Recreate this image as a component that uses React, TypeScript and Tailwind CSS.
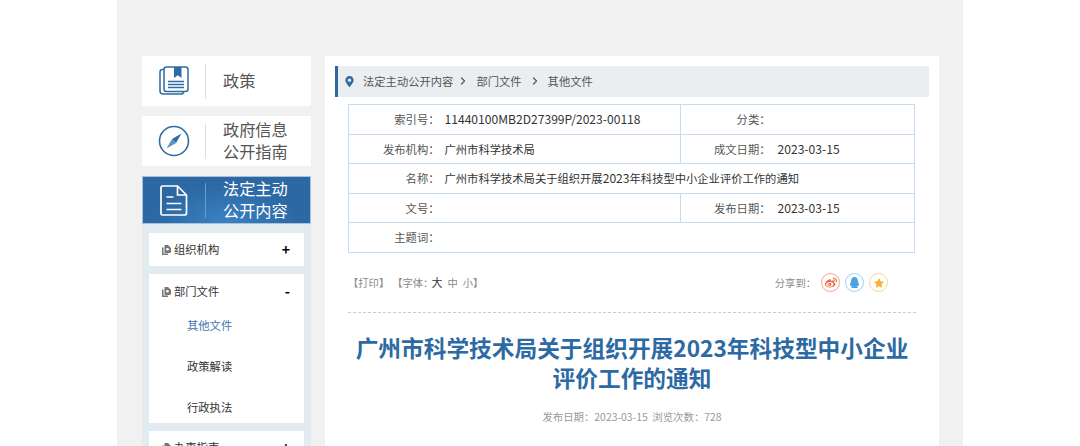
import { ChevronRight } from 'lucide-react'
import { FaMapMarkerAlt, FaQq, FaStar, FaWeibo } from 'react-icons/fa'

const font = { fontFamily: '"Noto Sans CJK SC", sans-serif' }

const BookIcon = () => (
  <svg width="30" height="30" viewBox="0 0 30 30" fill="none" stroke="#2f6ca6" strokeWidth="1.5">
    <path d="M5 3.500H3.500a2.500 2.500 0 0 0-2.500 2.500v19a3 3 0 0 0 3 3h18a2.500 2.500 0 0 0 2.500-2.200" />
    <rect x="5" y="1" width="24" height="24.500" rx="2.500" />
    <path d="M15 1h7.500v11l-3.700-2.800-3.800 2.800z" fill="#2f6ca6" stroke="none" />
    <path d="M9 15.500h16M9 18.500h16M9 21.500h16" />
  </svg>
)

const CompassIcon = () => (
  <svg width="32" height="32" viewBox="0 0 32 32" fill="none">
    <circle cx="16" cy="16" r="14.500" stroke="#2f6ca6" strokeWidth="1.600" />
    <path d="M23.500 8.500 18 18l-4-4z" fill="#2f6ca6" />
    <path d="M8.500 23.500 14 14l4 4z" fill="#2f6ca6" opacity="0.75" />
  </svg>
)

const DocIcon = () => (
  <svg width="28" height="31" viewBox="0 0 28 31" fill="none" stroke="#fff" strokeWidth="1.700">
    <path d="M2.500 1h15l9 9v18a2 2 0 0 1-2 2h-22a1.500 1.500 0 0 1-1.500-1.500v-26a1.500 1.500 0 0 1 1.500-1.500z" />
    <path d="M17.500 1v9h9M6.500 12h7M6.500 18.500h15M6.500 24.500h15" />
  </svg>
)

const ItemIcon = () => (
  <svg width="9" height="10" viewBox="0 0 9 10" className="shrink-0">
    <path d="M0 2.500h1.500V8.500H6V10H0z" fill="#777" />
    <path d="M2.500 0H6l3 3v3.500a1.500 1.500 0 0 1-1.500 1.500h-5z" fill="#777" />
    <circle cx="5.500" cy="4.200" r="1.300" fill="#fff" />
  </svg>
)

const NavCard = ({ icon, lines, active }: { icon: React.ReactNode; lines: string[]; active?: boolean }) => (
  <div
    className={
      active
        ? 'flex h-[48px] items-center border border-[#a9c3dc] bg-[radial-gradient(ellipse_at_50%_100%,#3b82c4_0%,#2c68a4_60%)] text-white'
        : 'flex h-[50px] items-center bg-white text-[#555]'
    }
  >
    <div className={active ? 'flex w-[62px] shrink-0 justify-center' : 'flex w-[63px] shrink-0 justify-center'}>{icon}</div>
    <div className={active ? 'h-[35px] w-px bg-[#6f9cc6]' : 'h-[35px] w-px bg-[#ddd]'} />
    <div className="pb-[2px] pl-[17px] text-[16.2px] leading-[22px]">
      {lines.map(l => (
        <div key={l}>{l}</div>
      ))}
    </div>
  </div>
)

const SideRow = ({ label, sign }: { label: string; sign: string }) => (
  <div className="flex h-[33px] items-center pl-[13px] pr-[14px] text-[11.3px] text-[#333]">
    <ItemIcon />
    <span className="ml-[3px]">{label}</span>
    <span className="ml-auto text-[14px] font-bold text-black">{sign}</span>
  </div>
)

const labelCell = 'border-y border-[#c6dcf0] text-right text-[#555]'
const valueCell = 'border-y border-r border-[#c6dcf0] pl-[5px] text-left text-[#333]'
const valueCellRight = 'border-y border-r border-[#c6dcf0] pl-[7px] text-left text-[#333]'
const latin = 'text-[12.1px]'

export default function App() {
  return (
    <div className="h-[446px] overflow-hidden bg-white" style={font}>
      <div className="mx-[117px] flex h-full gap-[14px] bg-[#f1f1f1] pl-[25px] pr-[24px] pt-[56px]">
        {/* left nav */}
        <div className="w-[169px] shrink-0">
          <NavCard icon={<BookIcon />} lines={['政策']} />
          <div className="mt-[10px]">
            <NavCard icon={<CompassIcon />} lines={['政府信息', '公开指南']} />
          </div>
          <div className="mt-[10px]">
            <NavCard active icon={<DocIcon />} lines={['法定主动', '公开内容']} />
          </div>
          <div className="bg-[#e1ebf0] px-[7px] pb-[8px] pt-[9px]">
            <div className="bg-white">
              <SideRow label="组织机构" sign="+" />
            </div>
            <div className="mt-[8px] h-[149px] bg-white pt-[1px]">
              <SideRow label="部门文件" sign="-" />
              <div className="pl-[38px] text-[11.3px] text-[#333]">
                <div className="h-[41px] pt-[7px] leading-[20px] text-[#3f75ad]">其他文件</div>
                <div className="h-[41px] pt-[7px] leading-[20px]">政策解读</div>
                <div className="h-[41px] pt-[7px] leading-[20px]">行政执法</div>
              </div>
            </div>
            <div className="mt-[8px] bg-white">
              <SideRow label="办事指南" sign="+" />
            </div>
          </div>
        </div>

        {/* main */}
        <div className="h-[500px] w-[614px] shrink-0 bg-white px-[10px] pt-[10px]">
          <div className="flex h-[31px] items-center border-l-[3px] border-[#2d6aa3] bg-[#ebeef1] pb-[1px] pl-[6px] text-[11.3px] text-[#555]">
            <FaMapMarkerAlt className="text-[#2d6aa3]" size={11} />
            <span className="ml-[8px]">法定主动公开内容</span>
            <ChevronRight className="ml-[4px]" size={12} strokeWidth={2.4} />
            <span className="ml-[7px]">部门文件</span>
            <ChevronRight className="ml-[7px]" size={12} strokeWidth={2.4} />
            <span className="ml-[7px]">其他文件</span>
          </div>

          <div className="mx-[13px] mt-[7px]">
            <table className="w-[567px] table-fixed border-collapse border-l border-[#c6dcf0] text-[11.3px]">
              <colgroup>
                <col className="w-[91px]" />
                <col className="w-[241px]" />
                <col className="w-[90px]" />
                <col />
              </colgroup>
              <tbody>
                <tr className="h-[30px]">
                  <td className={labelCell}>索引号：</td>
                  <td className={valueCell}>
                    <span className={latin}>11440100MB2D27399P/2023-00118</span>
                  </td>
                  <td className={labelCell}>分类：</td>
                  <td className={valueCellRight}></td>
                </tr>
                <tr className="h-[29px]">
                  <td className={labelCell}>发布机构：</td>
                  <td className={valueCell}>广州市科学技术局</td>
                  <td className={labelCell}>成文日期：</td>
                  <td className={valueCellRight}>
                    <span className={latin}>2023-03-15</span>
                  </td>
                </tr>
                <tr className="h-[30px]">
                  <td className={labelCell}>名称：</td>
                  <td className={valueCell} colSpan={3}>
                    广州市科学技术局关于组织开展<span className={latin}>2023</span>年科技型中小企业评价工作的通知
                  </td>
                </tr>
                <tr className="h-[29px]">
                  <td className={labelCell}>文号：</td>
                  <td className={valueCell}></td>
                  <td className={labelCell}>发布日期：</td>
                  <td className={valueCellRight}>
                    <span className={latin}>2023-03-15</span>
                  </td>
                </tr>
                <tr className="h-[30px]">
                  <td className={labelCell}>主题词：</td>
                  <td className={valueCell} colSpan={3}></td>
                </tr>
              </tbody>
            </table>

            {/* tools */}
            <div className="flex h-[60px] items-center border-b border-dashed border-[#ccc] text-[10.3px] text-[#888]">
              <span>【打印】</span>
              <span className="ml-[3px]">【字体：</span>
              <span className="ml-[-2px] text-[11px] text-[#333]">大</span>
              <span className="ml-[5px]">中</span>
              <span className="ml-[5px]">小</span>
              <span>】</span>
              <span className="ml-auto mr-[5px]">分享到：</span>
              <span className="flex size-[19px] items-center justify-center rounded-full border border-[#f5a58c] text-[#f0673c]">
                <FaWeibo size={12} />
              </span>
              <span className="ml-[5px] flex size-[19px] items-center justify-center rounded-full border border-[#9fd0f2] text-[#4ba3e3]">
                <FaQq size={11} />
              </span>
              <span className="ml-[5px] mr-[28px] flex size-[19px] items-center justify-center rounded-full border border-[#fbd596] text-[#f9b13c]">
                <FaStar size={10} />
              </span>
            </div>
          </div>

          <h1 className="mt-[20px] whitespace-nowrap text-center text-[22.7px] font-bold leading-[29.5px] text-[#2d6aa3]">
            广州市科学技术局关于组织开展2023年科技型中小企业
            <br />
            评价工作的通知
          </h1>
          <p className="mt-[17px] text-center text-[10.4px] text-[#999]">发布日期：2023-03-15&nbsp;&nbsp;浏览次数：728</p>
        </div>
      </div>
    </div>
  )
}
